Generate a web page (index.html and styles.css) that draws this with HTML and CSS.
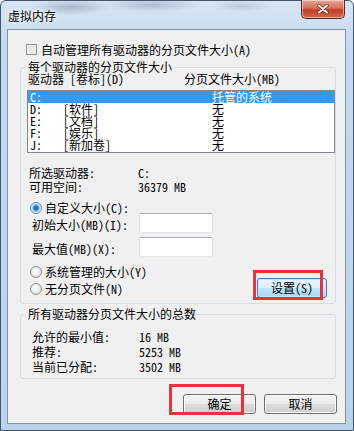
FILE: index.html
```html
<!DOCTYPE html>
<html lang="zh-CN">
<head>
    <meta charset="UTF-8">
    <title>虚拟内存</title>
    <link rel="stylesheet" href="styles.css">
</head>
<body>
<div class="window">
    <div class="titlebar">
        <span class="title">虚拟内存</span>
        <div class="close-btn">
            <svg width="12" height="10" viewBox="0 0 12 10">
                <path d="M2 1.5 L10 8.5 M10 1.5 L2 8.5" stroke="#5a2a22" stroke-width="3.4" stroke-linecap="round"/>
                <path d="M2 1.5 L10 8.5 M10 1.5 L2 8.5" stroke="#ffffff" stroke-width="2" stroke-linecap="round"/>
            </svg>
        </div>
    </div>

    <div class="client">
        <div class="check-row"><span class="checkbox"></span>自动管理所有驱动器的分页文件大小(A)</div>

        <fieldset class="group group-drives">
            <legend>每个驱动器的分页文件大小</legend>
            <div class="list-head">
                <span class="col-drive">驱动器 [卷标](D)</span>
                <span>分页文件大小(MB)</span>
            </div>
            <div class="listbox">
                <div class="list-row selected"><span>C:</span><span></span><span>托管的系统</span></div>
                <div class="list-row"><span>D:</span><span>[软件]</span><span>无</span></div>
                <div class="list-row"><span>E:</span><span>[文档]</span><span>无</span></div>
                <div class="list-row"><span>F:</span><span>[娱乐]</span><span>无</span></div>
                <div class="list-row"><span>J:</span><span>[新加卷]</span><span>无</span></div>
            </div>

            <div class="info first"><span>所选驱动器:</span><span>C:</span></div>
            <div class="info"><span>可用空间:</span><span>36379 MB</span></div>

            <div class="radio-row custom"><span class="radio checked"></span>自定义大小(C):</div>
            <div class="field-row initial"><span class="field-label">初始大小(MB)(I):</span><span class="textbox"></span></div>
            <div class="field-row"><span class="field-label">最大值(MB)(X):</span><span class="textbox"></span></div>
            <div class="radio-row system"><span class="radio"></span>系统管理的大小(Y)</div>
            <div class="set-row">
                <div class="radio-row"><span class="radio"></span>无分页文件(N)</div>
                <button class="btn btn-set">设置(S)</button>
            </div>
        </fieldset>

        <fieldset class="group group-total">
            <legend>所有驱动器分页文件大小的总数</legend>
            <div class="total-row first"><span>允许的最小值:</span><span>16 MB</span></div>
            <div class="total-row"><span>推荐:</span><span>5253 MB</span></div>
            <div class="total-row"><span>当前已分配:</span><span>3502 MB</span></div>
        </fieldset>

        <div class="buttons">
            <button class="btn">确定</button>
            <button class="btn">取消</button>
        </div>
    </div>

    <div class="mark mark-set"></div>
    <div class="mark mark-ok"></div>
</div>
</body>
</html>
```

FILE: styles.css
```css
body {
    margin: 0;
    background: #ffffff;
}
.window {
    position: relative;
    width: 354px;
    height: 431px;
    box-sizing: border-box;
    border: 1px solid #44566b;
    border-radius: 6px 6px 0 0;
    background:
        radial-gradient(ellipse 40px 8px at 70px 6px, rgba(80, 100, 125, 0.35), transparent),
        radial-gradient(ellipse 50px 7px at 150px 4px, rgba(80, 100, 125, 0.3), transparent),
        radial-gradient(ellipse 30px 6px at 240px 5px, rgba(80, 100, 125, 0.2), transparent),
        linear-gradient(180deg, #d7e6f4 0, #c6daee 40px, #bcd2e8 100%);
    font-family: "Noto Sans Mono CJK SC", "Noto Sans CJK SC", sans-serif;
    font-size: 12px;
    color: #000;
    display: flex;
    flex-direction: column;
}
.titlebar {
    height: 28px;
    display: flex;
    align-items: flex-start;
}
.title {
    margin: 8px 0 0 7px;
    line-height: 13px;
    font-size: 12px;
    text-shadow: 0 0 6px #ffffff, 0 0 3px #ffffff;
}
.close-btn {
    margin: -1px 8px 0 auto;
    width: 44px;
    height: 19px;
    box-sizing: border-box;
    border: 1px solid #5b2b24;
    border-top: none;
    border-radius: 0 0 5px 5px;
    background: linear-gradient(180deg, #e9a898 0%, #d86f5a 45%, #c23e25 55%, #d5664a 100%);
    box-shadow: inset 0 0 0 1px rgba(255, 255, 255, 0.45);
    display: flex;
    align-items: center;
    justify-content: center;
}
.client {
    margin-left: 6px;
    width: 339px;
    height: 395px;
    box-sizing: border-box;
    border: 1px solid #8294aa;
    background: #f0f0f0;
    padding: 0 9px 0 12px;
}
.check-row {
    margin-top: 13px;
    height: 13px;
    line-height: 13px;
    display: flex;
    align-items: center;
    padding-left: 6px;
}
.checkbox {
    width: 11px;
    height: 11px;
    box-sizing: border-box;
    border: 1px solid #8e8f8f;
    background: linear-gradient(135deg, #dcdcdc, #f6f6f6);
    box-shadow: inset 0 0 0 1px #f4f4f4;
    margin-right: 4px;
}
.group {
    margin: 0;
    padding: 0;
    min-width: 0;
    border: 1px solid #d5dfe5;
    border-radius: 3px;
}
.group legend {
    padding: 0 2px;
    margin-left: 5px;
    line-height: 12px;
}
.group-drives {
    margin-top: 5px;
    height: 243px;
    box-sizing: border-box;
}
.list-head {
    display: flex;
    line-height: 12px;
    padding-left: 7px;
}
.col-drive {
    width: 156px;
}
.listbox {
    margin: 5px 0 0 6px;
    width: 308px;
    height: 63px;
    box-sizing: border-box;
    border: 1px solid #828790;
    background: #ffffff;
}
.list-row {
    display: grid;
    grid-template-columns: 33px 149px 1fr;
    height: 12px;
    line-height: 12px;
    padding-left: 2px;
}
.list-row.selected {
    background: #3399ff;
    color: #ffffff;
}
.info {
    display: grid;
    grid-template-columns: 109px 1fr;
    height: 14px;
    line-height: 14px;
    padding-left: 8px;
}
.info.first {
    margin-top: 13px;
}
.radio-row {
    display: flex;
    align-items: center;
    height: 12px;
    line-height: 12px;
    padding-left: 9px;
}
.radio {
    width: 12px;
    height: 12px;
    box-sizing: border-box;
    border-radius: 50%;
    border: 1px solid #8e8f8f;
    background: radial-gradient(circle at 45% 40%, #ffffff 0, #e4e4e4 70%, #d0d0d0 100%);
    margin-right: 3px;
}
.radio.checked {
    border-color: #5b88b0;
    background: radial-gradient(circle at 50% 50%, #0d4f90 0, #2b86d6 2px, #8cc8f0 3.5px, #e6f1fa 4.5px, #f4f4f4 100%);
}
.radio-row.custom {
    margin-top: 8px;
}
.field-row {
    display: flex;
    align-items: flex-start;
    height: 20px;
    margin-top: 4px;
    padding-left: 11px;
}
.field-row.initial {
    margin-top: -1px;
}
.field-label {
    width: 107px;
    margin-top: 6px;
    line-height: 12px;
}
.textbox {
    width: 74px;
    height: 20px;
    box-sizing: border-box;
    border: 1px solid #abadb3;
    border-color: #abadb3 #dbdfe6 #e3e9ef #e2e3ea;
    border-radius: 2px;
    background: #ffffff;
}
.radio-row.system {
    margin-top: 9px;
}
.set-row {
    display: flex;
    align-items: flex-start;
    justify-content: space-between;
    height: 20px;
    padding-right: 8px;
}
.set-row .radio-row {
    margin-top: 5px;
}
.btn {
    width: 73px;
    height: 20px;
    box-sizing: border-box;
    padding: 0;
    border: 1px solid #707070;
    border-radius: 3px;
    background: linear-gradient(180deg, #f2f2f2 0%, #ebebeb 50%, #dddddd 50%, #cfcfcf 100%);
    box-shadow: inset 0 0 0 1px #fbfbfb;
    font: inherit;
    color: #000;
    line-height: 16px;
}
.btn-set {
    width: 70px;
    border-color: #3c7fb1;
    background: linear-gradient(180deg, #eaf6fd 0%, #d9f0fc 50%, #bee6fd 50%, #a7d9f5 100%);
    box-shadow: inset 0 0 0 1px #c8e8f9;
}
.group-total {
    margin-top: 4px;
    height: 71px;
    box-sizing: border-box;
}
.total-row {
    display: grid;
    grid-template-columns: 107px 1fr;
    height: 15px;
    line-height: 15px;
    padding-left: 11px;
}
.total-row.first {
    margin-top: 9px;
}
.buttons {
    display: flex;
    justify-content: flex-end;
    gap: 8px;
    margin: 15px -1px 0 0;
}
.mark {
    position: absolute;
    box-sizing: border-box;
    border: 3px solid #e5343d;
}
.mark-set {
    left: 252px;
    top: 269px;
    width: 70px;
    height: 30px;
}
.mark-ok {
    left: 168px;
    top: 383px;
    width: 75px;
    height: 31px;
}
```
